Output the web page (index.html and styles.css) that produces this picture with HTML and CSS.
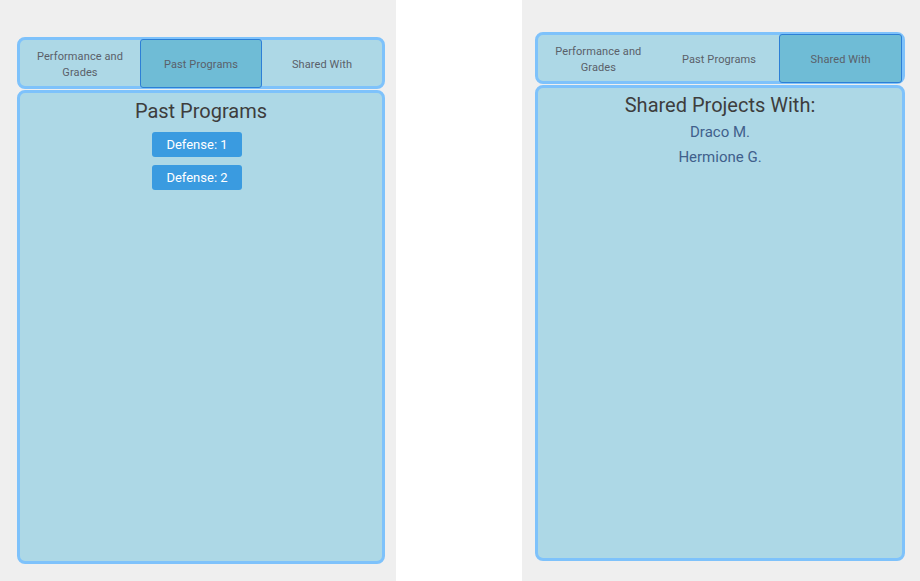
FILE: index.html
```html
<!DOCTYPE html>
<html>
<head>
<meta charset="utf-8">
<link rel="stylesheet" href="styles.css">
</head>
<body>
  <div class="pane pane-left">
    <div class="tabbar">
      <div class="tab">Performance and<br>Grades</div>
      <div class="tab active">Past Programs</div>
      <div class="tab">Shared With</div>
    </div>
    <div class="content">
      <h2 class="title">Past Programs</h2>
      <div class="btn-list">
        <button class="btn">Defense: 1</button>
        <button class="btn">Defense: 2</button>
      </div>
    </div>
  </div>
  <div class="pane pane-right">
    <div class="tabbar">
      <div class="tab">Performance and<br>Grades</div>
      <div class="tab">Past Programs</div>
      <div class="tab active">Shared With</div>
    </div>
    <div class="content">
      <h2 class="title">Shared Projects With:</h2>
      <div class="names">
        <div class="name">Draco M.</div>
        <div class="name">Hermione G.</div>
      </div>
    </div>
  </div>
</body>
</html>
```

FILE: styles.css
```css
* { box-sizing: border-box; }
html, body { margin: 0; padding: 0; }
body {
  background: #ffffff;
  height: 581px;
  display: flex;
  font-family: Roboto, "Noto Sans", sans-serif;
  overflow: hidden;
}
.pane {
  background: #efefef;
  display: flex;
  flex-direction: column;
  height: 581px;
}
.pane-left {
  width: 396px;
  padding: 37px 11px 17px 17px;
}
.pane-right {
  width: 398px;
  margin-left: 126px;
  padding: 32px 15px 20px 13px;
}
.tabbar {
  height: 52px;
  flex: none;
  display: flex;
  background: #add8e6;
  border: 3px solid #7ec2fb;
  border-radius: 8px;
}
.tab {
  flex: 1;
  display: flex;
  align-items: center;
  justify-content: center;
  text-align: center;
  font-size: 11px;
  line-height: 16px;
  letter-spacing: 0.1px;
  color: #5a6069;
  padding-top: 3px;
}
.tab.active {
  background: #6fbcd6;
  border: 1.5px solid #2d7fd6;
  border-radius: 3px;
  margin: -1px 0 -2px;
}
.content {
  flex: 1;
  margin-top: 1px;
  background: #add8e6;
  border: 3px solid #7ec2fb;
  border-radius: 8px;
  display: flex;
  flex-direction: column;
  align-items: center;
  padding-top: 3px;
}
.pane-right .content { padding-top: 2px; }
.title {
  margin: 0;
  font-size: 20px;
  font-weight: 400;
  line-height: 30px;
  color: #3d3d3d;
}
.btn-list {
  display: flex;
  flex-direction: column;
  align-items: center;
  gap: 8px;
  margin-top: 6px;
  margin-right: 8px;
}
.btn {
  font-family: Roboto, "Noto Sans", sans-serif;
  font-size: 13px;
  color: #ffffff;
  background: #3a9be0;
  border: none;
  border-radius: 3px;
  height: 25px;
  padding: 0 14px;
}
.names {
  display: flex;
  flex-direction: column;
  align-items: center;
  margin-top: 0;
}
.name {
  font-size: 15px;
  line-height: 25px;
  color: #40608c;
}
```
